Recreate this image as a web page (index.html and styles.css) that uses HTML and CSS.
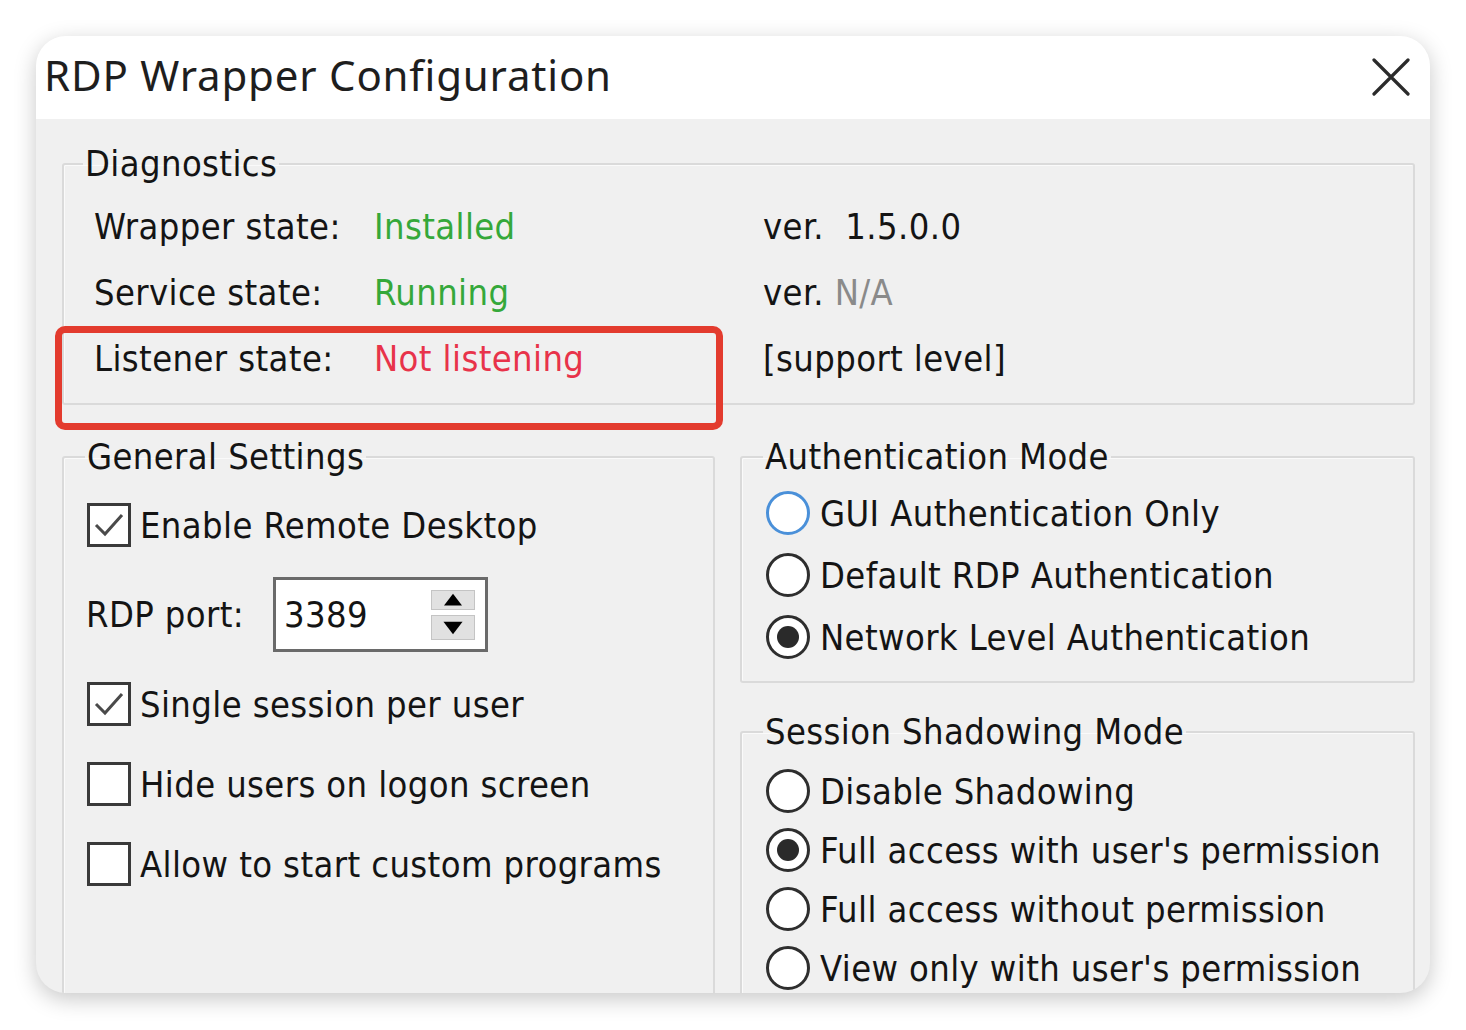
FILE: index.html
```html
<!DOCTYPE html>
<html>
<head>
<meta charset="utf-8">
<title>RDP Wrapper Configuration</title>
<link rel="stylesheet" href="styles.css">
</head>
<body>
<div class="stage">
  <div class="window">
    <div class="titlebar">
      <span class="title">RDP Wrapper Configuration</span>
      <svg class="close" viewBox="0 0 38 38" width="38" height="38"><path d="M2 2 L36 36 M36 2 L2 36" stroke="#2b2b2b" stroke-width="3.2" stroke-linecap="round" fill="none"/></svg>
    </div>
    <div class="content">
      <fieldset class="group diag">
        <legend>Diagnostics</legend>
        <div class="diag-grid">
          <span>Wrapper state:</span><span class="ok">Installed</span><span>ver.&nbsp; 1.5.0.0</span>
          <span>Service state:</span><span class="ok">Running</span><span>ver. <span class="na">N/A</span></span>
          <span>Listener state:</span><span class="bad">Not listening</span><span>[support level]</span>
        </div>
      </fieldset>
      <div class="columns">
        <fieldset class="group general">
          <legend>General Settings</legend>
          <div class="opt row1">
            <span class="check on"><svg viewBox="0 0 38 38"><path d="M6 19 L15 28 L32 9" stroke="#4a4a4a" stroke-width="3" fill="none"/></svg></span>
            <span>Enable Remote Desktop</span>
          </div>
          <div class="port">
            <span class="port-label">RDP port:</span>
            <div class="spin">
              <span class="spin-value">3389</span>
              <div class="spin-btns">
                <span class="spin-btn up"><svg viewBox="0 0 44 20"><path d="M22 3 L32 16 L12 16 Z" fill="#000"/></svg></span>
                <span class="spin-btn down"><svg viewBox="0 0 44 24"><path d="M12 6 L32 6 L22 19 Z" fill="#000"/></svg></span>
              </div>
            </div>
          </div>
          <div class="opt row3">
            <span class="check on"><svg viewBox="0 0 38 38"><path d="M6 19 L15 28 L32 9" stroke="#4a4a4a" stroke-width="3" fill="none"/></svg></span>
            <span>Single session per user</span>
          </div>
          <div class="opt row4">
            <span class="check"></span>
            <span>Hide users on logon screen</span>
          </div>
          <div class="opt row5">
            <span class="check"></span>
            <span>Allow to start custom programs</span>
          </div>
        </fieldset>
        <div class="rightcol">
          <fieldset class="group auth">
            <legend>Authentication Mode</legend>
            <div class="radio-row first"><span class="radio focus"></span><span>GUI Authentication Only</span></div>
            <div class="radio-row"><span class="radio"></span><span>Default RDP Authentication</span></div>
            <div class="radio-row"><span class="radio sel"></span><span>Network Level Authentication</span></div>
          </fieldset>
          <fieldset class="group shadow">
            <legend>Session Shadowing Mode</legend>
            <div class="radio-row first"><span class="radio"></span><span>Disable Shadowing</span></div>
            <div class="radio-row"><span class="radio sel"></span><span>Full access with user's permission</span></div>
            <div class="radio-row"><span class="radio"></span><span>Full access without permission</span></div>
            <div class="radio-row"><span class="radio"></span><span>View only with user's permission</span></div>
          </fieldset>
        </div>
      </div>
    </div>
    <div class="highlight"></div>
  </div>
</div>
</body>
</html>
```

FILE: styles.css
```css
html, body {
  margin: 0;
  padding: 0;
  background: #ffffff;
}

.stage {
  padding: 36px;
  width: 1394px;
  height: 957px;
}

.window {
  position: relative;
  width: 1394px;
  height: 957px;
  border-radius: 30px;
  overflow: hidden;
  background: #f0f0f0;
  box-shadow: 0 6px 22px rgba(0, 0, 0, 0.22);
  font-family: "DejaVu Sans", Tahoma, sans-serif;
  font-stretch: condensed;
  font-size: 36px;
  letter-spacing: 0.4px;
  color: #141414;
}

.titlebar {
  height: 83px;
  background: #ffffff;
  display: flex;
  align-items: center;
  justify-content: space-between;
  padding: 0 20px 6px 8px;
  box-sizing: border-box;
}

.title {
  font-family: "Noto Sans", "Open Sans", sans-serif;
  font-stretch: normal;
  font-size: 42px;
  color: #1e1e1e;
  letter-spacing: 0.8px;
}

.close {
  width: 38px;
  height: 38px;
  display: block;
  margin-top: 4px;
}

.content {
  padding: 23px 15px 0 26px;
}

.group {
  margin: 0;
  padding: 0;
  min-width: 0;
  border: 2px solid #dadada;
  border-radius: 3px;
  box-shadow: inset 1px 1px 0 #fafafa;
}

.group legend {
  margin-left: 19px;
  padding: 0 2px;
  line-height: 44px;
  height: 44px;
}

.diag-grid {
  display: grid;
  grid-template-columns: 280px 389px 1fr;
  grid-auto-rows: 66px;
  align-items: center;
  margin-top: 7px;
  padding: 0 0 12px 30px;
}

.ok { color: #35a83a; }
.bad { color: #e8334a; }
.na { color: #8a8a8a; }

.columns {
  display: grid;
  grid-template-columns: 653px 1fr;
  column-gap: 25px;
  margin-top: 30px;
}

.general {
  height: 600px;
  padding-left: 23px;
}

.general legend {
  margin-left: -2px;
}

.opt {
  display: flex;
  align-items: center;
  gap: 9px;
  height: 44px;
}

.row1 { margin-top: 24px; }
.row3 { margin-top: 30px; }
.row4 { margin-top: 36px; }
.row5 { margin-top: 36px; }

.check {
  width: 44px;
  height: 44px;
  box-sizing: border-box;
  border: 3px solid #3a3a3a;
  background: #ffffff;
  display: flex;
  align-items: center;
  justify-content: center;
}

.check svg {
  width: 38px;
  height: 38px;
}

.port {
  display: flex;
  align-items: center;
  margin-top: 30px;
  margin-left: -1px;
}

.port-label {
  width: 187px;
}

.spin {
  width: 215px;
  height: 75px;
  box-sizing: border-box;
  border: 3px solid #6a6a6a;
  background: #ffffff;
  display: flex;
  align-items: center;
  justify-content: space-between;
  padding: 0 10px 0 8px;
}

.spin-btns {
  display: flex;
  flex-direction: column;
  gap: 5px;
}

.spin-btn {
  width: 44px;
  background: #e1e1e1;
  border: 1px solid #c4c4c4;
  box-sizing: border-box;
  display: block;
}

.spin-btn svg { display: block; width: 100%; height: 100%; }
.spin-btn.up { height: 20px; }
.spin-btn.down { height: 25px; }

.rightcol {
  display: flex;
  flex-direction: column;
}

.auth, .shadow {
  padding-left: 24px;
}

.auth legend, .shadow legend {
  margin-left: -3px;
}

.auth {
  padding-bottom: 22px;
}

.shadow {
  margin-top: 27px;
  height: 400px;
}

.radio-row {
  display: flex;
  align-items: center;
  gap: 10px;
  height: 44px;
  margin-top: 18px;
}

.auth .radio-row.first { margin-top: 12px; }
.shadow .radio-row { margin-top: 15px; }
.shadow .radio-row.first { margin-top: 15px; }

.radio {
  width: 44px;
  height: 44px;
  box-sizing: border-box;
  border-radius: 50%;
  border: 3px solid #2e2e2e;
  background: #ffffff;
  display: flex;
  align-items: center;
  justify-content: center;
}

.radio.focus {
  border-color: #4a90d9;
}

.radio.sel::after {
  content: "";
  width: 22px;
  height: 22px;
  border-radius: 50%;
  background: #2a2a2a;
}

.highlight {
  position: absolute;
  left: 19px;
  top: 290px;
  width: 668px;
  height: 104px;
  box-sizing: border-box;
  border: 7px solid #e33b2e;
  border-radius: 10px;
}
```
